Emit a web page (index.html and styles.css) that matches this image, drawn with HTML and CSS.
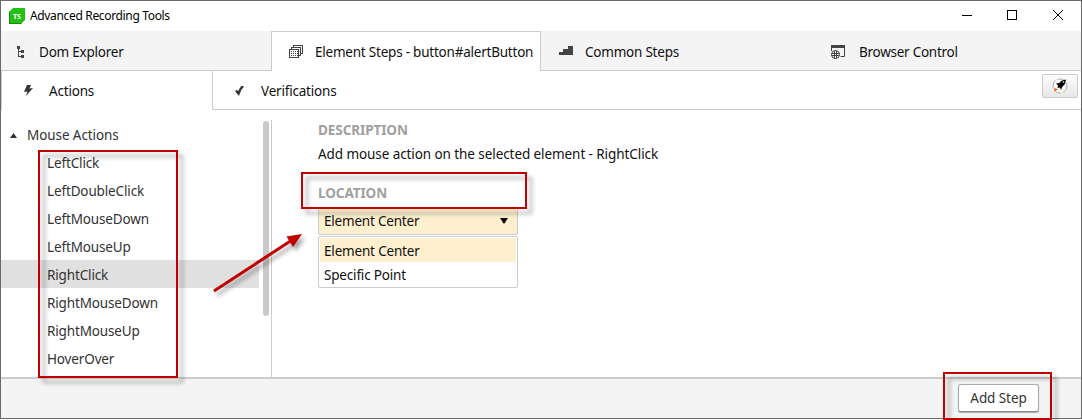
FILE: index.html
```html
<!DOCTYPE html>
<html lang="en">
<head>
<meta charset="utf-8">
<title>Advanced Recording Tools</title>
<link rel="stylesheet" href="styles.css">
</head>
<body>
<div class="window">
  <header class="titlebar">
    <svg class="logo" width="16" height="16" viewBox="0 0 16 16"><path d="M4 0H16V12L12 16H0V4Z" fill="#23c114"/><path d="M0 4V16H12L13 15H1V3Z" fill="#168c0b"/><text x="8" y="10.800" text-anchor="middle" class="logo-text">TS</text></svg>
    <span class="title">Advanced Recording Tools</span>
    <svg class="controls" width="102" height="12" viewBox="0 0 102 12" fill="none" stroke="#000"><path d="M0 6.500H10"/><rect x="45.500" y="1.500" width="9" height="9"/><path d="M91 1L101 11M101 1L91 11"/></svg>
  </header>
  <nav class="tabs">
    <div class="tab tab-dom"><svg class="icon" width="14" height="14" viewBox="0 0 14 14" fill="#444"><path d="M3 1h3v3H5v2h2V5h3v3H7V7H5v4h2v-1h3v3H7v-1H4V4H3z"/></svg><span>Dom Explorer</span></div>
    <div class="tab tab-element"><svg class="icon" width="14" height="14" viewBox="0 0 14 14" fill="none" stroke="#444"><path d="M.5 4.500h9v8h-9zM2.500 4V2.500h9v8H10M4.500 2V.5h9v8H12" stroke-width="1.100"/><path d="M2 6.500h7M2 8.500h7M2 10.500h7" stroke-dasharray="1 1"/></svg><span>Element Steps - button#alertButton</span></div>
    <div class="tab tab-common"><svg class="icon" width="14" height="14" viewBox="0 0 14 14" fill="#444"><path d="M0 10V7h4V4h5V1h5v9z"/></svg><span>Common Steps</span></div>
    <div class="tab tab-browser"><svg class="icon" width="15" height="15" viewBox="0 0 15 15" fill="none" stroke="#444"><path d="M0 0h14v3H0z" fill="#444" stroke="none"/><path d="M.5 2v4M13.500 2v9.500H9.500"/><circle cx="4.500" cy="9.500" r="4" fill="#f4f4f4"/><path d="M3.500 6v7.500M5.500 6v7.500M.5 8.500h8M.5 10.500h8"/></svg><span>Browser Control</span></div>
  </nav>
  <nav class="subtabs">
    <div class="subtab sub-actions"><svg class="icon" width="10" height="12" viewBox="0 0 10 12" fill="#333"><path d="M3 0H7L5.500 3.500L9 3L2 11L3.500 6.500L0 7Z"/></svg><span>Actions</span></div>
    <div class="subtab sub-verify"><svg class="icon" width="10" height="10" viewBox="0 0 10 10"><path d="M1 4.500L3.500 7.500Q5 3 8 0" fill="none" stroke="#333" stroke-width="2.400"/></svg><span>Verifications</span>
      <button class="rocket" aria-label="Quick launch"><svg width="16" height="16" viewBox="0 0 16 16"><circle cx="8" cy="8" r="7" fill="#fff" stroke="#aaa" stroke-dasharray="8 2"/><path d="M14 1.500L10 2.500L7 5L4 5.500L6 7.500L5.500 10L8 9.500L9 12L10.500 8.500L13 6Z" fill="#000"/><circle cx="11.500" cy="4" r=".9" fill="#bbb"/><path d="M2 9.500L6 11.500L2.500 13.500Z" fill="#f06a30"/></svg></button>
    </div>
  </nav>
  <main class="body">
    <aside class="sidebar">
      <div class="tree">
        <div class="group"><svg width="7" height="5" viewBox="0 0 7 5"><path d="M3.500 0L7 5H0Z" fill="#333"/></svg><span>Mouse Actions</span></div>
        <div class="item">LeftClick</div>
        <div class="item">LeftDoubleClick</div>
        <div class="item">LeftMouseDown</div>
        <div class="item">LeftMouseUp</div>
        <div class="item selected">RightClick</div>
        <div class="item">RightMouseDown</div>
        <div class="item">RightMouseUp</div>
        <div class="item">HoverOver</div>
      </div>
      <div class="scrollbar"></div>
    </aside>
    <section class="detail">
      <h2>DESCRIPTION</h2>
      <p>Add mouse action on the selected element - RightClick</p>
      <h2>LOCATION</h2>
      <div class="select"><span>Element Center</span><svg width="8" height="6" viewBox="0 0 8 6"><path d="M0 0H8L4 6Z" fill="#000"/></svg></div>
      <div class="options"><div class="option active">Element Center</div><div class="option">Specific Point</div></div>
    </section>
  </main>
  <footer class="footer"><button class="add">Add Step</button></footer>
</div>
<svg class="marks" width="1082" height="420" viewBox="0 0 1082 420">
  <g fill="none" stroke="#c00000" stroke-width="2">
    <rect class="mark" x="39" y="151" width="138" height="226"/>
    <rect class="mark" x="302" y="173" width="224" height="35"/>
    <rect class="mark" x="944" y="373" width="107" height="46"/>
  </g>
  <g class="mark arrow"><path d="M214 291L292 240" stroke="#c00000" stroke-width="3"/><path d="M302 234L286.500 236.500L293 247Z" fill="#c00000"/></g>
</svg>
</body>
</html>
```
FILE: styles.css
```css
* { box-sizing: border-box; }
body { margin: 0; width: 1082px; height: 420px; overflow: hidden; background: #fff; font: 13.5px/20px "Noto Sans", "Open Sans", sans-serif; color: #111; }
.window { width: 1082px; height: 419px; border: 1px solid #6b6a69; background: #fff; display: flex; flex-direction: column; }
.titlebar { height: 30px; flex: none; display: flex; align-items: center; padding: 0 17px 0 8px; }
.logo-text { font: bold 7px "Open Sans", sans-serif; fill: #fff; }
.title { font-size: 12px; margin-left: 5px; letter-spacing: -.34px; color: #000; }
.controls { margin: -2px 0 0 auto; }
.tabs { height: 40px; flex: none; display: flex; background: #f4f4f4; letter-spacing: -.22px; }
.tab { display: flex; align-items: center; border-bottom: 1px solid #ccc; white-space: nowrap; padding-top: 3px; }
.icon { flex: none; }
.tab-dom { width: 270px; padding-left: 13px; gap: 11px; }
.tab-element { width: 270px; padding: 0 0 0 17px; gap: 12px; background: #fff; border: 1px solid #ccc; border-bottom: 0; }
.tab-element span { padding-top: 1px; }
.tab-common { width: 270px; padding-left: 18px; gap: 12px; }
.tab-browser { flex: 1; padding-left: 20px; gap: 13px; letter-spacing: -.26px; }
.subtabs { height: 39px; flex: none; display: flex; letter-spacing: -.2px; }
.subtab { display: flex; align-items: center; }
.sub-actions { width: 211px; border-left: 1px solid #ccc; padding: 0 0 0 22px; gap: 15px; }
.sub-actions span { padding-top: 1px; }
.sub-verify { flex: 1; border: solid #ccc; border-width: 0 0 1px 1px; padding: 2px 3px 0 22px; gap: 16px; }
.rocket { width: 36px; height: 24px; margin: -10px 0 0 auto; padding: 0; display: flex; align-items: center; justify-content: center; border: 1px solid #ccc; border-radius: 2px; background: linear-gradient(#fbfbfb, #e8e8e8); }
.body { flex: 1; display: flex; padding-top: 10px; border-bottom: 2px solid #ccc; }
.sidebar { width: 271px; border-right: 1px solid #ccc; display: flex; gap: 4px; color: #333; letter-spacing: -.14px; }
.tree { width: 258px; }
.group, .item { height: 28px; line-height: 30px; }
.group { display: flex; align-items: center; gap: 10px; padding: 2px 0 0 9px; letter-spacing: -.08px; }
.item { padding-left: 46px; }
.selected { background: #e0e0e0; }
.scrollbar { width: 6px; height: 195px; margin-top: 1px; border-radius: 3px; background: #c9c9c9; }
.detail { padding-left: 46px; letter-spacing: -.08px; }
h2 { margin: 0; font-size: 13.5px; line-height: 20px; font-weight: bold; color: #a0a0a0; }
.detail p { margin: 4px 0 19px; }
.select { width: 200px; height: 28px; margin-top: 4px; padding: 0 9px 0 5px; display: flex; align-items: center; justify-content: space-between; border: 1px solid #ccc; border-radius: 2px; background: #fef0ce; letter-spacing: -.2px; }
.options { width: 200px; height: 52px; margin-top: 1px; padding: 1px; border: 1px solid #ccc; border-radius: 2px; letter-spacing: -.18px; }
.option { height: 24px; line-height: 26px; padding-left: 4px; }
.active { background: #fef0ce; }
.footer { height: 39px; flex: none; background: #f4f4f4; display: flex; justify-content: flex-end; padding: 5px 42px 0 0; }
.add { width: 81px; height: 28px; padding: 0; font: inherit; letter-spacing: -.08px; color: #333; background: #fff; border: 1px solid #aaa; border-bottom-color: #888; border-radius: 3px; box-shadow: 0 1px 1px #aaa; }
.marks { position: absolute; left: 0; top: 0; }
.mark { filter: drop-shadow(5px 5px 2px rgba(0, 0, 0, .35)); }
.arrow { filter: drop-shadow(3px 4px 2px rgba(0, 0, 0, .35)); }
```
